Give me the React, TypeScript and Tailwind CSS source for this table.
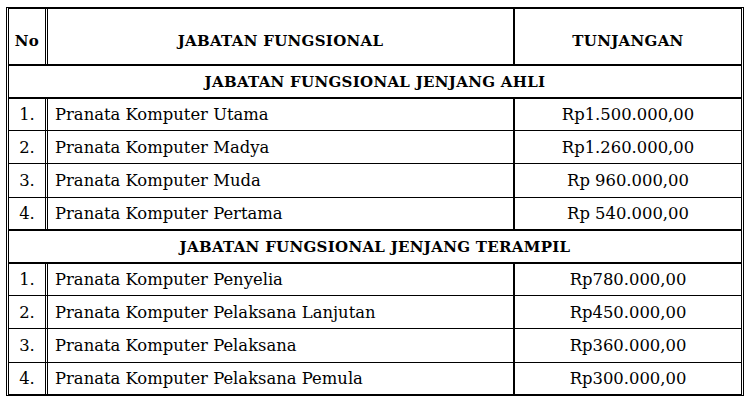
import React from "react";

type Row = { no: string; name: string; amount: string; h: string; last?: boolean };

const ahli: Row[] = [
  { no: "1.", name: "Pranata Komputer Utama", amount: "Rp1.500.000,00", h: "h-[32px]" },
  { no: "2.", name: "Pranata Komputer Madya", amount: "Rp1.260.000,00", h: "h-[33px]" },
  { no: "3.", name: "Pranata Komputer Muda", amount: "Rp 960.000,00", h: "h-[34px]" },
  { no: "4.", name: "Pranata Komputer Pertama", amount: "Rp 540.000,00", h: "h-[33px]", last: true },
];

const terampil: Row[] = [
  { no: "1.", name: "Pranata Komputer Penyelia", amount: "Rp780.000,00", h: "h-[32px]" },
  { no: "2.", name: "Pranata Komputer Pelaksana Lanjutan", amount: "Rp450.000,00", h: "h-[33px]" },
  { no: "3.", name: "Pranata Komputer Pelaksana", amount: "Rp360.000,00", h: "h-[34px]" },
  { no: "4.", name: "Pranata Komputer Pelaksana Pemula", amount: "Rp300.000,00", h: "h-[31px]", last: true },
];

function DataRow({ r, noBorder }: { r: Row; noBorder?: boolean }) {
  const border = noBorder ? "" : r.last ? "border-b-2 border-black" : "border-b border-black";
  return (
    <div className={`flex ${r.h} ${border} text-[16.4px]`}>
      <div className="w-[39px] shrink-0 flex items-center justify-center pt-[2px] border-r-[3px] border-double border-black">
        {r.no}
      </div>
      <div className="w-[467px] shrink-0 flex items-center pl-[7px] pt-[2px] border-r-2 border-black">
        {r.name}
      </div>
      <div className="flex-1 flex items-center justify-center pt-[2px]">{r.amount}</div>
    </div>
  );
}

function Section({ title }: { title: string }) {
  return (
    <div className="h-[33px] flex items-center justify-center pt-[2px] border-b-2 border-black font-bold text-[15px] tracking-[0.3px]">
      {title}
    </div>
  );
}

export default function App() {
  return (
    <div className="w-[750px] h-[404px] bg-white pt-[7px] pl-[6px] text-black" style={{ fontFamily: '"DejaVu Serif", serif' }}>
      <div className="w-[738px] border-l-[3px] border-r-[3px] border-t-2 border-b-2 border-double [border-top-style:solid] [border-bottom-style:solid] border-black">
        <div className="flex h-[57px] border-b-2 border-black font-bold text-[15px] tracking-[0.3px]">
          <div className="w-[39px] shrink-0 flex items-center justify-center pt-[10px] border-r-[3px] border-double border-black">
            No
          </div>
          <div className="w-[467px] shrink-0 flex items-center justify-center pt-[10px] border-r-2 border-black">
            JABATAN FUNGSIONAL
          </div>
          <div className="flex-1 flex items-center justify-center pt-[10px]">TUNJANGAN</div>
        </div>
        <Section title="JABATAN FUNGSIONAL JENJANG AHLI" />
        {ahli.map((r, i) => (
          <DataRow key={"a" + i} r={r} />
        ))}
        <Section title="JABATAN FUNGSIONAL JENJANG TERAMPIL" />
        {terampil.map((r, i) => (
          <DataRow key={"t" + i} r={r} noBorder={i === terampil.length - 1} />
        ))}
      </div>
    </div>
  );
}
